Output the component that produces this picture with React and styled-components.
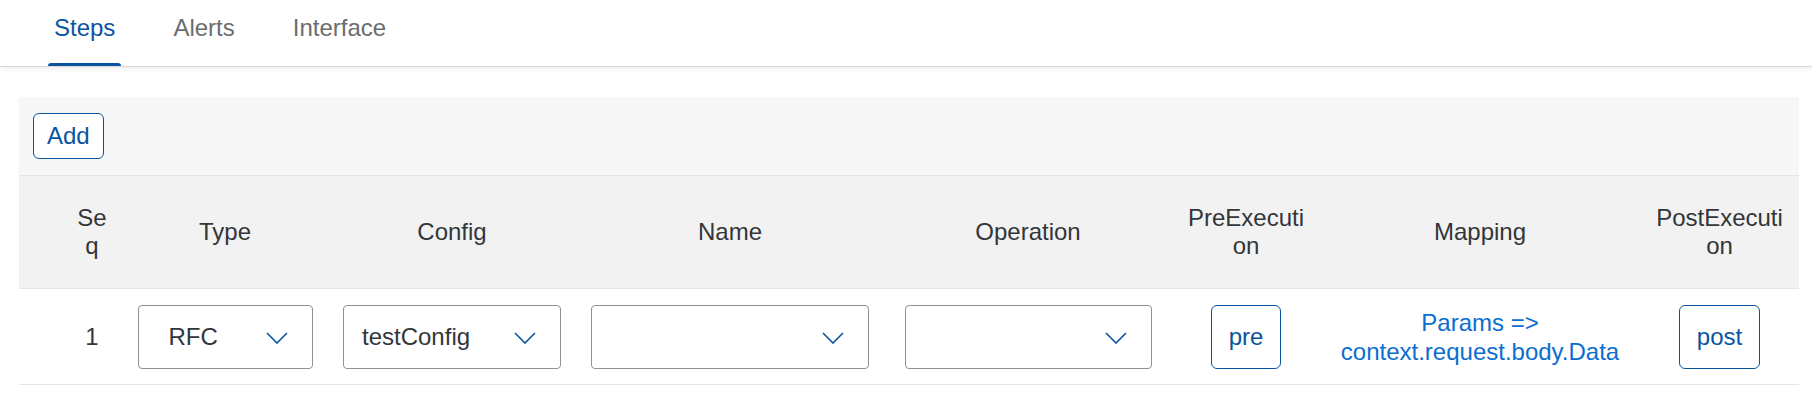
import React from "react";
import styled, { createGlobalStyle } from "styled-components";

const GlobalStyle = createGlobalStyle`
  html, body {
    margin: 0;
    padding: 0;
    background: #ffffff;
  }
  body {
    font-family: "Liberation Sans", Arial, sans-serif;
    font-size: 24px;
    color: #32363a;
  }
  * { box-sizing: border-box; }
`;

const Page = styled.div`
  width: 1812px;
  min-height: 404px;
  background: #ffffff;
`;

const TabBar = styled.div`
  display: flex;
  gap: 46px;
  padding: 14px 0 0 48px;
  border-bottom: 1px solid #d9d9d9;
  box-shadow: 0 2px 5px rgba(0, 0, 0, 0.07);
`;

const Tab = styled.div`
  display: flex;
  flex-direction: column;
  align-items: stretch;
  cursor: pointer;
`;

const TabLabel = styled.span`
  padding: 0 6px 21px;
  line-height: 28px;
  color: ${(p) => (p.$active ? "#0854a0" : "#6a6d70")};
`;

const TabIndicator = styled.span`
  height: 3px;
  border-radius: 3px 3px 0 0;
  background: ${(p) => (p.$active ? "#0854a0" : "transparent")};
`;

const Content = styled.div`
  padding: 30px 13px 0 19px;
`;

const Toolbar = styled.div`
  display: flex;
  align-items: center;
  padding: 16px 14px;
  background: #f7f7f7;
  border-bottom: 1px solid #e5e5e5;
`;

const Button = styled.button`
  font-family: inherit;
  font-size: 24px;
  line-height: 28px;
  color: #0854a0;
  background: #ffffff;
  border: 1px solid #0854a0;
  border-radius: 6px;
  padding: ${(p) => (p.$tall ? "17px 17px" : "8px 13px")};
  cursor: pointer;
`;

const Row = styled.div`
  display: grid;
  grid-template-columns: 43px 60px 206px 248px 308px 288px 148px 320px 1fr;
  align-items: center;
  border-bottom: 1px solid #e5e5e5;
  height: ${(p) => (p.$header ? "113px" : "96px")};
  background: ${(p) => (p.$header ? "#f2f2f2" : "#ffffff")};
`;

const HeadCell = styled.div`
  padding: 0 12px;
  text-align: center;
  line-height: 28px;
  word-break: break-all;
  color: #32363a;
`;

const Cell = styled.div`
  display: flex;
  justify-content: center;
  align-items: center;
  padding: 0 12px;
  line-height: 28px;
  color: #32363a;
`;

const SelectBox = styled.div`
  display: flex;
  align-items: center;
  justify-content: space-between;
  width: ${(p) => p.$width}px;
  height: 64px;
  padding: 0 24px 0 ${(p) => p.$pad}px;
  border: 1px solid #89919a;
  border-radius: 4px;
  background: #ffffff;
  color: #32363a;
  line-height: 28px;
  cursor: pointer;
`;

const Chevron = styled.svg`
  flex: none;
  width: 22px;
  height: 12px;
  margin-top: 3px;
`;

const MappingLink = styled.a`
  color: #0a6ed1;
  text-align: center;
  line-height: 29px;
  text-decoration: none;
  cursor: pointer;
`;

function Select({ value, width, pad = 18 }) {
  return (
    <SelectBox $width={width} $pad={pad}>
      <span>{value}</span>
      <Chevron viewBox="0 0 22 12" aria-hidden="true">
        <path d="M1 1 L11 11 L21 1" fill="none" stroke="#0854a0" strokeWidth="1.6" />
      </Chevron>
    </SelectBox>
  );
}

const headers = ["", "Seq", "Type", "Config", "Name", "Operation", "PreExecution", "Mapping", "PostExecution"];

export default function App() {
  return (
    <Page>
      <GlobalStyle />
      <TabBar>
        {["Steps", "Alerts", "Interface"].map((t, i) => (
          <Tab key={t}>
            <TabLabel $active={i === 0}>{t}</TabLabel>
            <TabIndicator $active={i === 0} />
          </Tab>
        ))}
      </TabBar>
      <Content>
        <Toolbar>
          <Button>Add</Button>
        </Toolbar>
        <Row $header>
          {headers.map((h, i) => (
            <HeadCell key={i}>{h}</HeadCell>
          ))}
        </Row>
        <Row>
          <Cell />
          <Cell>1</Cell>
          <Cell>
            <Select value="RFC" width={175} pad={30} />
          </Cell>
          <Cell>
            <Select value="testConfig" width={218} pad={18} />
          </Cell>
          <Cell>
            <Select value="" width={278} />
          </Cell>
          <Cell>
            <Select value="" width={247} />
          </Cell>
          <Cell>
            <Button $tall>pre</Button>
          </Cell>
          <Cell>
            <MappingLink>Params =&gt; context.request.body.Data</MappingLink>
          </Cell>
          <Cell>
            <Button $tall>post</Button>
          </Cell>
        </Row>
      </Content>
    </Page>
  );
}
